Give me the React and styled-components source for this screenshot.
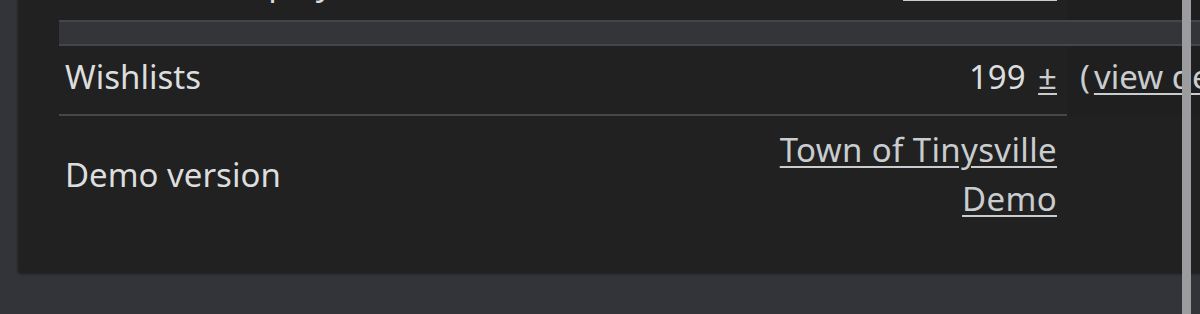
import React from "react";
import styled, { createGlobalStyle } from "styled-components";

const GlobalStyle = createGlobalStyle`
  html, body {
    margin: 0;
    padding: 0;
    background: #333439;
    overflow: hidden;
    font-family: "Noto Sans", "Open Sans", sans-serif;
  }
`;

const Page = styled.div`
  position: relative;
  width: 1200px;
  height: 314px;
  overflow: hidden;
  padding-left: 18px;
  box-sizing: border-box;
`;

const Panel = styled.div`
  width: 1240px;
  margin-top: -48px;
  padding: 0 0 41px 41px;
  background: #212121;
  border-radius: 4px;
  box-shadow: 0 1px 3px rgba(0, 0, 0, 0.45);
`;

const Row = styled.div`
  display: flex;
  align-items: stretch;
`;

const Main = styled.div`
  width: 1008px;
  flex: none;
  box-sizing: border-box;
  display: flex;
  justify-content: space-between;
  align-items: center;
  padding: ${(p) => (p.$tall ? "9px 10px 9px 6px" : "6px 10px 13px 6px")};
  border-bottom: ${(p) => (p.$line ? "2px solid #46474b" : "none")};
  font-size: 33px;
  line-height: 49px;
`;

const Extra = styled.div`
  flex: 1;
  padding: 6px 0 13px 13px;
  font-size: 33px;
  line-height: 49px;
  color: #c9cdd0;
  white-space: nowrap;
  background: #1f1f1f;
`;

const Label = styled.span`
  color: #dcdddf;
`;

const Value = styled.div`
  color: #dcdddf;
  text-align: right;
  white-space: nowrap;
`;

const Link = styled.a`
  color: #c9cdd0;
  text-decoration: underline;
  text-decoration-thickness: 2px;
  text-underline-offset: 4px;
  letter-spacing: ${(p) => (p.$wide ? "0.35px" : "0")};
  margin-left: ${(p) => (p.$gap ? "4px" : "0")};
`;

const Band = styled.div`
  height: 22px;
  background: #343539;
  border-top: 2px solid #45464b;
  border-bottom: 2px solid #45464b;
`;

const Scrollbar = styled.div`
  position: absolute;
  top: 0;
  bottom: 0;
  left: 1182px;
  width: 9px;
  background: #9b9c9e;
`;

export default function App() {
  return (
    <>
      <GlobalStyle />
      <Page>
        <Panel>
          <Row>
            <Main>
              <Label>Median time played</Label>
              <Value>
                <Link>8 minutes</Link>
              </Value>
            </Main>
            <Extra />
          </Row>
          <Band />
          <Row>
            <Main $line>
              <Label>Wishlists</Label>
              <Value>
                199 <Link $gap>±</Link>
              </Value>
            </Main>
            <Extra>
              (<Link $gap>view details</Link>)
            </Extra>
          </Row>
          <Row>
            <Main $tall>
              <Label>Demo version</Label>
              <Value>
                <Link $wide>Town of Tinysville</Link>
                <br />
                <Link $wide>Demo</Link>
              </Value>
            </Main>
          </Row>
        </Panel>
        <Scrollbar />
      </Page>
    </>
  );
}
